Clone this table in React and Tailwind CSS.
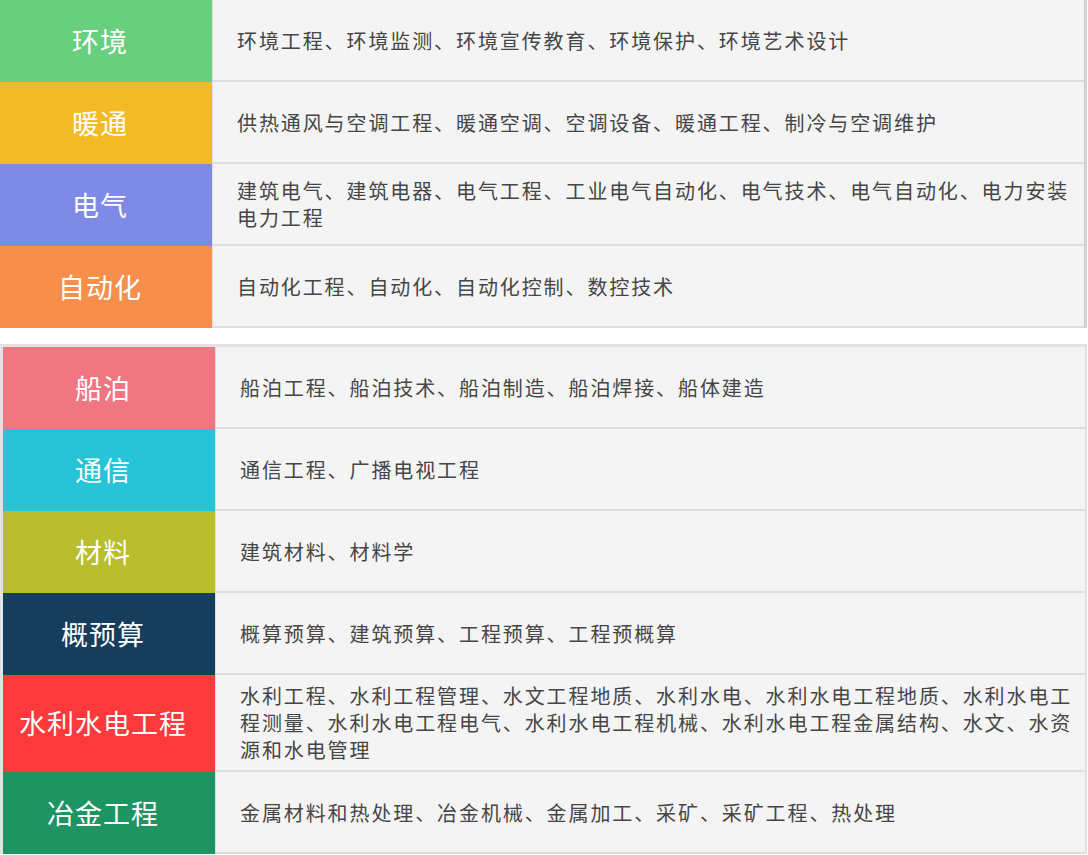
import React from "react";

const groupOne = [
  { label: "环境", color: "bg-[#67cf7d]", text: ["环境工程、环境监测、环境宣传教育、环境保护、环境艺术设计"] },
  { label: "暖通", color: "bg-[#f2bb26]", text: ["供热通风与空调工程、暖通空调、空调设备、暖通工程、制冷与空调维护"] },
  { label: "电气", color: "bg-[#7f89e6]", text: ["建筑电气、建筑电器、电气工程、工业电气自动化、电气技术、电气自动化、电力安装", "电力工程"] },
  { label: "自动化", color: "bg-[#f68f4b]", text: ["自动化工程、自动化、自动化控制、数控技术"] },
];

const groupTwo = [
  { label: "船泊", color: "bg-[#f07682]", text: ["船泊工程、船泊技术、船泊制造、船泊焊接、船体建造"] },
  { label: "通信", color: "bg-[#27c3d6]", text: ["通信工程、广播电视工程"] },
  { label: "材料", color: "bg-[#b8be2d]", text: ["建筑材料、材料学"] },
  { label: "概预算", color: "bg-[#163d5c]", text: ["概算预算、建筑预算、工程预算、工程预概算"] },
  {
    label: "水利水电工程",
    color: "bg-[#fc3a3b]",
    tall: true,
    text: ["水利工程、水利工程管理、水文工程地质、水利水电、水利水电工程地质、水利水电工程测量、水利水电工程电气、水利水电工程机械、水利水电工程金属结构、水文、水资源和水电管理"],
  },
  { label: "冶金工程", color: "bg-[#1e9462]", text: ["金属材料和热处理、冶金机械、金属加工、采矿、采矿工程、热处理"] },
];

function Row({ item }) {
  return (
    <div className="flex items-stretch">
      <div
        className={`${item.color} w-[212px] shrink-0 flex items-center justify-center pr-[12px] text-white text-[27px] tracking-[1px]`}
      >
        {item.label}
      </div>
      <div
        className={`flex-1 flex items-center bg-[#f4f4f4] border-l border-b-2 border-[#dedede] pl-[24px] pr-[4px] text-[#464646] text-[20px] tracking-[1.9px] leading-[27px] ${
          item.tall ? "min-h-[95px] py-[7px]" : "min-h-[82px]"
        }`}
      >
        <div>
          {item.text.map((line, i) => (
            <div key={i}>{line}</div>
          ))}
        </div>
      </div>
    </div>
  );
}

export default function App() {
  return (
    <div
      className="w-[1088px] bg-white pb-[2px]"
      style={{ fontFamily: '"Noto Sans CJK SC", "Noto Sans", sans-serif' }}
    >
      <div className="flex flex-col border-r-[3px] border-[#d2d2d2] mr-[1px]">
        {groupOne.map((item) => (
          <Row key={item.label} item={item} />
        ))}
      </div>
      <div className="h-[16px]"></div>
      <div className="flex flex-col border-t-[3px] border-l-[3px] border-r-[2px] border-[#e2e2e2] mr-[1px]">
        {groupTwo.map((item) => (
          <Row key={item.label} item={item} />
        ))}
      </div>
    </div>
  );
}
